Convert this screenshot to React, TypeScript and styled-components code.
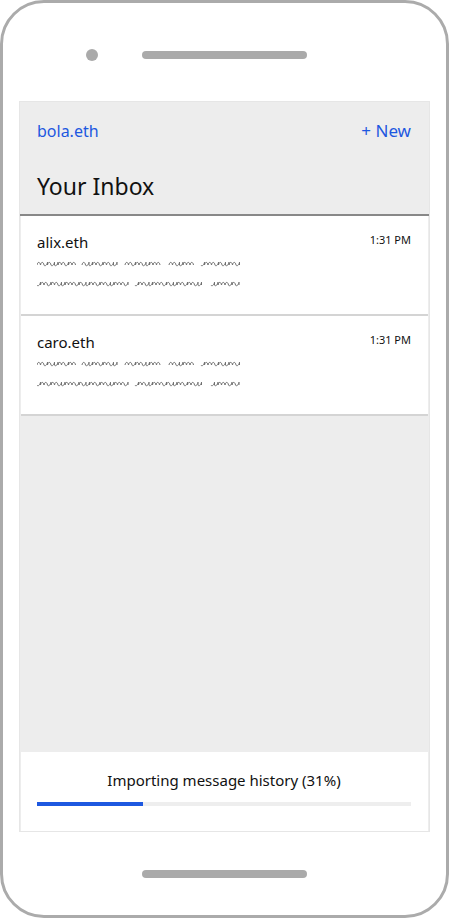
import { createGlobalStyle, styled } from 'styled-components'

const GlobalStyle = createGlobalStyle`
  html, body {
    margin: 0;
    padding: 0;
    background: #ffffff;
  }
  body {
    font-family: "Comic Sans MS", "Noto Sans", "DejaVu Sans", sans-serif;
    color: #111;
  }
`

const Phone = styled.div`
  width: 449px;
  height: 918px;
  box-sizing: border-box;
  border: 3px solid #ababab;
  border-radius: 44px;
  background: #fff;
  display: flex;
  flex-direction: column;
  overflow: hidden;
`

const TopBezel = styled.div`
  height: 98px;
  box-sizing: border-box;
  padding: 6px 0 0 83px;
  display: flex;
  align-items: center;
  gap: 44px;
`

const Camera = styled.div`
  width: 12px;
  height: 12px;
  border-radius: 50%;
  background: #aaaaaa;
`

const Speaker = styled.div`
  width: 165px;
  height: 8px;
  border-radius: 4px;
  background: #aaaaaa;
`

const Screen = styled.div`
  margin: 0 16px;
  height: 731px;
  box-sizing: border-box;
  border: 1px solid #e6e6e6;
  background: #ededed;
  display: flex;
  flex-direction: column;
`

const Header = styled.div`
  padding: 18px 18px 14px 17px;
  border-bottom: 2px solid #888888;
`

const TopRow = styled.div`
  display: flex;
  justify-content: space-between;
  align-items: center;
  height: 22px;
`

const Link = styled.span<{ $size: number }>`
  color: #1d58e0;
  font-size: ${(p) => p.$size}px;
  line-height: 22px;
`

const Title = styled.h1`
  margin: 30px 0 0;
  font-size: 23px;
  line-height: 28px;
  font-weight: normal;
  color: #111;
`

const List = styled.div`
  margin: 0 1px;
  display: flex;
  flex-direction: column;
`

const Row = styled.div`
  height: 100px;
  box-sizing: border-box;
  padding: 16px 17px 0 16px;
  background: #fff;
  border-bottom: 2px solid #d4d4d4;
  display: grid;
  grid-template-columns: 1fr auto;
  grid-template-rows: 20px auto;
  align-items: start;
`

const Name = styled.div`
  font-size: 15px;
  line-height: 20px;
`

const Time = styled.div`
  font-size: 11px;
  line-height: 16px;
`

const Preview = styled.svg`
  grid-column: 1 / span 2;
  display: block;
`

const Filler = styled.div`
  flex: 1;
`

const ImportPanel = styled.div`
  margin: 0 1px;
  height: 79px;
  box-sizing: border-box;
  padding: 18px 17px 0 16px;
  background: #fff;
`

const ImportText = styled.div`
  font-size: 15px;
  line-height: 20px;
  text-align: center;
`

const Track = styled.div`
  margin-top: 12px;
  height: 4px;
  background: #eeeeee;
`

const Fill = styled.div`
  height: 100%;
  background: #1d58e0;
`

const BottomBezel = styled.div`
  flex: 1;
  display: flex;
  justify-content: center;
  align-items: center;
`

const HomeBar = styled.div`
  width: 165px;
  height: 8px;
  border-radius: 4px;
  background: #aaaaaa;
`

// word spans of the scribbled preview text, two lines
const previewLines: [number, number][][] = [
  [[0, 41], [45, 80], [88, 125], [132, 156], [164, 202]],
  [[0, 91], [98, 166], [174, 202]],
]

// handwriting-ish squiggle: mix of n-arches and u-cups
const shapes = [1, 1, 0, 1, 0, 0, 1, 1, 0, 1, 1, 0, 0, 1]

const wavePath = (x0: number, x1: number, y: number, seed: number) => {
  let d = `M${x0} ${y + 1}`
  let k = seed
  for (let x = x0; x + 3.5 <= x1 + 0.5; x += 3.5) {
    const arch = shapes[k % shapes.length] === 1
    const end = x + 3.5
    if (arch) {
      d += ` C${x + 0.6} ${y - 2.5} ${end - 0.6} ${y - 2.5} ${end} ${y + 1}`
    } else {
      d += ` C${x + 0.3} ${y + 2.2} ${end - 0.8} ${y + 2.2} ${end} ${y - 1.8}`
      d += ` L${end} ${y + 1}`
    }
    k++
  }
  return d
}

const Scribble = () => (
  <Preview width="210" height="40" viewBox="0 0 210 40">
    {previewLines.map((line, i) =>
      line.map(([a, b], j) => (
        <path
          key={`${i}-${j}`}
          d={wavePath(a, b, 12 + i * 20, i * 5 + j * 3)}
          fill="none"
          stroke="#6f6f6f"
          strokeWidth="1"
          strokeLinejoin="round"
        />
      ))
    )}
  </Preview>
)

const threads = [
  { name: 'alix.eth', time: '1:31 PM' },
  { name: 'caro.eth', time: '1:31 PM' },
]

export default function App() {
  const progress = 28.3

  return (
    <>
      <GlobalStyle />
      <Phone>
        <TopBezel>
          <Camera />
          <Speaker />
        </TopBezel>
        <Screen>
          <Header>
            <TopRow>
              <Link $size={16}>bola.eth</Link>
              <Link $size={17}>+ New</Link>
            </TopRow>
            <Title>Your Inbox</Title>
          </Header>
          <List>
            {threads.map((t) => (
              <Row key={t.name}>
                <Name>{t.name}</Name>
                <Time>{t.time}</Time>
                <Scribble />
              </Row>
            ))}
          </List>
          <Filler />
          <ImportPanel>
            <ImportText>Importing message history (31%)</ImportText>
            <Track>
              <Fill style={{ width: `${progress}%` }} />
            </Track>
          </ImportPanel>
        </Screen>
        <BottomBezel>
          <HomeBar />
        </BottomBezel>
      </Phone>
    </>
  )
}
